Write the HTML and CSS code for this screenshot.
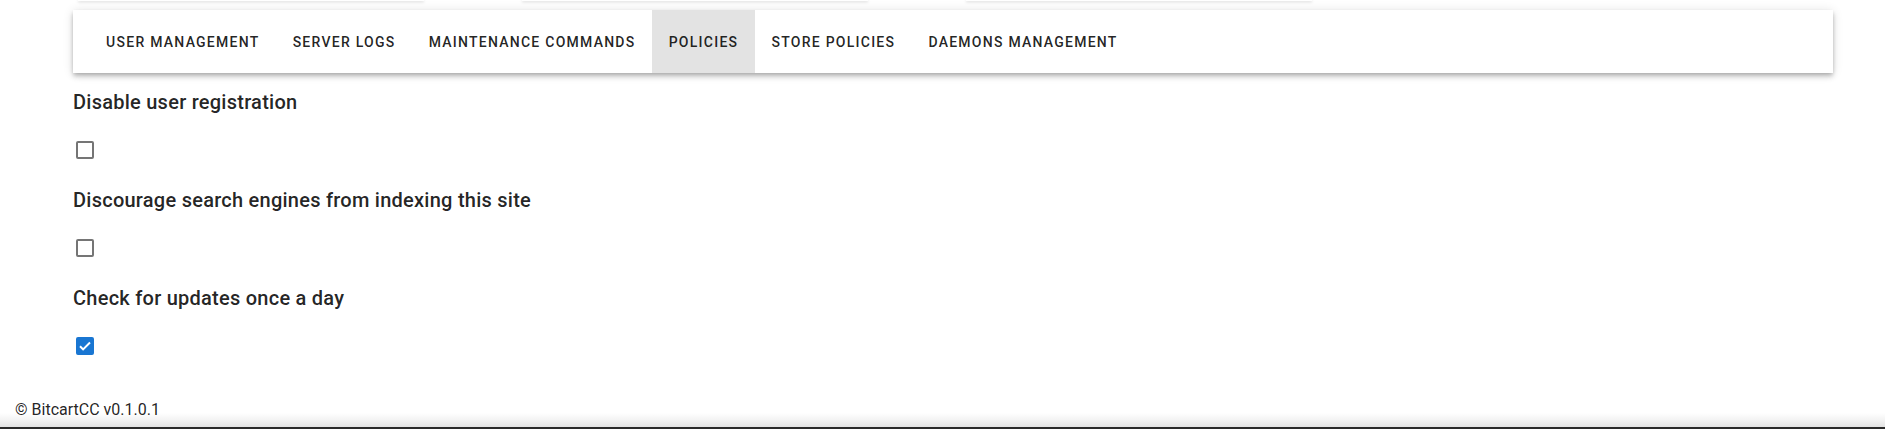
FILE: index.html
```html
<!DOCTYPE html>
<html lang="en">
<head>
<meta charset="utf-8">
<title>Admin settings - Policies</title>
<link rel="stylesheet" href="styles.css">
</head>
<body>
<div class="cards-row">
  <div class="card"></div>
  <div class="card"></div>
  <div class="card"></div>
</div>
<main class="main">
  <nav class="tabbar">
    <div class="tabs">
      <div class="tab">User management</div>
      <div class="tab">Server logs</div>
      <div class="tab">Maintenance commands</div>
      <div class="tab tab-active">Policies</div>
      <div class="tab">Store policies</div>
      <div class="tab">Daemons management</div>
    </div>
  </nav>
  <section class="settings">
    <div class="setting">
      <div class="setting-title">Disable user registration</div>
      <div class="checkbox-row">
        <span class="checkbox"></span>
      </div>
    </div>
    <div class="setting">
      <div class="setting-title">Discourage search engines from indexing this site</div>
      <div class="checkbox-row">
        <span class="checkbox"></span>
      </div>
    </div>
    <div class="setting">
      <div class="setting-title">Check for updates once a day</div>
      <div class="checkbox-row">
        <span class="checkbox checkbox-on">
          <svg viewBox="0 0 18 18" width="18" height="18"><path d="M4 9.3l3.1 3.1L14 5.5" fill="none" stroke="#fff" stroke-width="2"/></svg>
        </span>
      </div>
    </div>
  </section>
</main>
<footer class="footer">
  <span class="footer-text">© BitcartCC v0.1.0.1</span>
</footer>
</body>
</html>
```
FILE: styles.css
```css
html, body {
  margin: 0;
  padding: 0;
  background: #fff;
}
body {
  font-family: Roboto, "Noto Sans", "Liberation Sans", sans-serif;
  color: rgba(0, 0, 0, 0.87);
  overflow: hidden;
  height: 429px;
  display: flex;
  flex-direction: column;
}
.cards-row {
  display: flex;
  height: 1px;
  padding-left: 78px;
  gap: 98px;
}
.card {
  width: 346px;
  height: 1px;
  background: #fff;
  box-shadow: 0 1px 3px rgba(0, 0, 0, 0.25);
}
.main {
  padding: 9px 52px 0 73px;
}
.tabbar {
  height: 63px;
  background: #fff;
  box-shadow: 0 2px 4px -1px rgba(0, 0, 0, 0.2), 0 4px 5px 0 rgba(0, 0, 0, 0.14), 0 1px 10px 0 rgba(0, 0, 0, 0.12);
  display: flex;
}
.tabs {
  display: flex;
  padding-left: 16.5px;
  height: 100%;
}
.tab {
  display: flex;
  align-items: center;
  padding: 0 16.6px;
  font-size: 14px;
  font-weight: 500;
  letter-spacing: 0.0892857em;
  text-transform: uppercase;
  color: rgba(0, 0, 0, 0.87);
}
.tab-active {
  background: #e3e3e3;
}
.settings {
  margin-top: 13px;
}
.setting {
  height: 98px;
}
.setting-title {
  font-size: 20px;
  line-height: 32px;
  font-weight: 500;
  letter-spacing: 0.0125em;
}
.checkbox-row {
  margin-top: 16px;
  padding-top: 4px;
  height: 24px;
  display: flex;
  align-items: center;
}
.checkbox {
  width: 14px;
  height: 14px;
  margin-left: 3px;
  border: 2px solid #757575;
  border-radius: 2px;
  display: flex;
  align-items: center;
  justify-content: center;
}
.checkbox-on {
  background: #1976d2;
  border-color: #1976d2;
}
.checkbox-on svg {
  flex: none;
}
.footer {
  margin-top: 12px;
  height: 35px;
  padding-left: 15px;
  background: linear-gradient(to bottom, #fff 0, #fff 21px, #f3f3f3 28px, #e2e2e2 35px);
  border-bottom: 2px solid #2a2a2a;
}
.footer-text {
  display: block;
  padding-top: 6px;
  font-size: 16px;
  line-height: 24px;
}
```
